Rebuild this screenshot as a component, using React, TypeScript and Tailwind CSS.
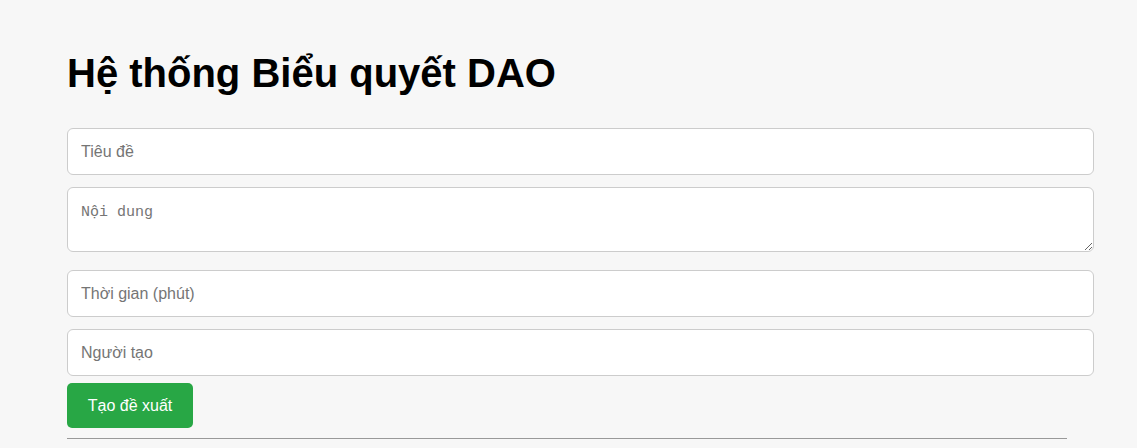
import React, { useState } from 'react';

export default function App() {
    const [title, setTitle] = useState('');
    const [content, setContent] = useState('');
    const [duration, setDuration] = useState('');
    const [creator, setCreator] = useState('');

    const inputClass =
        'block w-full h-[47px] px-[13px] rounded-[6px] border border-[#cccccc] bg-white text-[16px] text-[#333] placeholder:text-[#757575] outline-none font-["Liberation_Sans",Arial,sans-serif]';

    return (
        <div className="min-h-[448px] bg-[#f7f7f7] font-['Liberation_Sans',Arial,sans-serif]">
            <div className="pl-[67px] pr-[43px] pt-[50px]">
                <h1 className="text-[40px] font-bold leading-[46px] text-black mb-[32px]">
                    Hệ thống Biểu quyết DAO
                </h1>

                <input
                    className={`${inputClass} mb-[12px]`}
                    placeholder="Tiêu đề"
                    value={title}
                    onChange={(e) => setTitle(e.target.value)}
                />
                <textarea
                    className="block w-full h-[65px] px-[13px] pt-[16px] pb-[8px] rounded-[6px] border border-[#cccccc] bg-white text-[15px] leading-[18px] text-[#333] placeholder:text-[#757575] outline-none font-['Liberation_Mono',monospace] mb-[18px]"
                    placeholder="Nội dung"
                    value={content}
                    onChange={(e) => setContent(e.target.value)}
                />
                <input
                    className={`${inputClass} mb-[12px]`}
                    placeholder="Thời gian (phút)"
                    value={duration}
                    onChange={(e) => setDuration(e.target.value)}
                />
                <input
                    className={`${inputClass} mb-[7px]`}
                    placeholder="Người tạo"
                    value={creator}
                    onChange={(e) => setCreator(e.target.value)}
                />
                <button className="h-[45px] w-[126px] rounded-[5px] bg-[#28a745] text-white text-[16px] hover:bg-[#218838]">
                    Tạo đề xuất
                </button>
                <hr className="mt-[10px] w-[1000px] border-0 border-t border-[#999999]" />
            </div>
        </div>
    );
}
